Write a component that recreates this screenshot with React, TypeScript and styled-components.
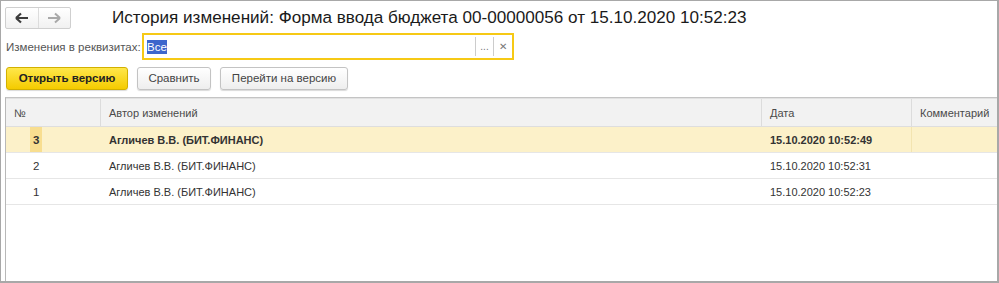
import React from "react";
import styled, { createGlobalStyle } from "styled-components";

const GlobalStyle = createGlobalStyle`
  html, body { margin: 0; padding: 0; background: #ffffff; }
  body { font-family: "Liberation Sans", Arial, sans-serif; }
  * { box-sizing: border-box; }
`;

const Frame = styled.div`
  width: 999px;
  height: 283px;
  border-style: solid;
  border-color: #a8a8a8;
  border-width: 1px 2px 2px 1px;
  display: flex;
  flex-direction: column;
  overflow: hidden;
  background: #fff;
`;

const TopBar = styled.div`
  display: flex;
  align-items: center;
  height: 30px;
  padding: 3px 0 0 4px;
`;

const NavGroup = styled.div`
  display: flex;
  width: 66px;
  height: 22px;
  border: 1px solid #cfcfcf;
  border-radius: 2px;
  background: linear-gradient(#ffffff, #f1f1f1);
`;

const NavButton = styled.div<{ $divider?: boolean }>`
  flex: 1;
  display: flex;
  align-items: center;
  justify-content: center;
  border-right: ${(p) => (p.$divider ? "1px solid #dcdcdc" : "none")};
`;

const Title = styled.div`
  margin-left: 41px;
  font-size: 17.1px;
  color: #1a1a1a;
  white-space: nowrap;
`;

const FieldRow = styled.div`
  display: flex;
  align-items: center;
  height: 27px;
  margin-top: 2px;
  padding-left: 5px;
`;

const Label = styled.div`
  font-size: 11.5px;
  color: #555;
  width: 136px;
  white-space: nowrap;
`;

const InputBox = styled.div`
  width: 372px;
  height: 27px;
  border: 2px solid #f6c915;
  display: flex;
  align-items: center;
  background: #fff;
`;

const InputValue = styled.div`
  flex: 1;
  padding-left: 3px;
  font-size: 11.5px;
`;

const Selected = styled.span`
  background: #3d66cc;
  color: #fff;
  padding: 1px 0;
`;

const InputAction = styled.div<{ $w: number }>`
  width: ${(p) => p.$w}px;
  height: 19px;
  border-left: 1px solid #cccccc;
  display: flex;
  align-items: center;
  justify-content: center;
  font-size: 10px;
  color: #777;
`;

const ButtonRow = styled.div`
  display: flex;
  align-items: center;
  gap: 9px;
  height: 24px;
  margin-top: 6px;
  padding-left: 5px;
`;

const Button = styled.div<{ $primary?: boolean; $w: number }>`
  width: ${(p) => p.$w}px;
  height: 23px;
  display: flex;
  align-items: center;
  justify-content: center;
  font-size: 11.5px;
  border-radius: 3px;
  white-space: nowrap;
  color: ${(p) => (p.$primary ? "#222" : "#444")};
  font-weight: ${(p) => (p.$primary ? 700 : 400)};
  border: 1px solid ${(p) => (p.$primary ? "#d2b000" : "#c3c3c3")};
  background: ${(p) =>
    p.$primary
      ? "linear-gradient(#ffe74a, #f4cb00)"
      : "linear-gradient(#ffffff, #eeeeee)"};
  box-shadow: 0 1px 1px rgba(0, 0, 0, 0.15);
`;

const Table = styled.div`
  margin: 7px 0 0 4px;
  flex: 1;
  border-left: 1px solid #b8b8b8;
  border-top: 1px solid #c4c4c4;
  display: flex;
  flex-direction: column;
`;

const cols = "95px 661px 150px 1fr";

const HeadRow = styled.div`
  display: grid;
  grid-template-columns: ${cols};
  height: 29px;
  background: #f2f2f2;
  border-top: 1px solid #e2e2e2;
  border-bottom: 1px solid #dedede;
`;

const HeadCell = styled.div<{ $last?: boolean }>`
  display: flex;
  align-items: center;
  padding-left: 8px;
  font-size: 11px;
  color: #4a4a4a;
  border-right: ${(p) => (p.$last ? "none" : "1px solid #dcdcdc")};
  white-space: nowrap;
  overflow: hidden;
`;

const Row = styled.div<{ $selected?: boolean }>`
  display: grid;
  grid-template-columns: ${cols};
  height: 26px;
  background: ${(p) => (p.$selected ? "#fcf1c9" : "#ffffff")};
  border-bottom: 1px solid #e6e6e6;
  font-weight: ${(p) => (p.$selected ? 700 : 400)};
`;

const Cell = styled.div<{ $sep?: boolean }>`
  display: flex;
  align-items: center;
  padding-left: 8px;
  font-size: 11px;
  color: #333;
  white-space: nowrap;
  border-right: ${(p) => (p.$sep ? "1px solid #f3e4b0" : "none")};
`;

const NumCell = styled.div`
  display: flex;
  align-items: stretch;
  padding-left: 24px;
  font-size: 11.5px;
  color: #333;
`;

const NumMark = styled.span<{ $active?: boolean }>`
  display: flex;
  align-items: center;
  padding: 0 3px;
  background: ${(p) => (p.$active ? "#f8de90" : "transparent")};
`;

const rows = [
  { n: "3", date: "15.10.2020 10:52:49", selected: true },
  { n: "2", date: "15.10.2020 10:52:31" },
  { n: "1", date: "15.10.2020 10:52:23" },
];

export default function App() {
  return (
    <>
      <GlobalStyle />
      <Frame>
        <TopBar>
          <NavGroup>
            <NavButton $divider>
              <svg width="14" height="12" viewBox="0 0 14 12">
                <path d="M1 6 L6 1.5 M1 6 L6 10.5 M1 6 H13" stroke="#3c3c3c" strokeWidth="2.2" fill="none" />
              </svg>
            </NavButton>
            <NavButton>
              <svg width="14" height="12" viewBox="0 0 14 12">
                <path d="M13 6 L8 1.5 M13 6 L8 10.5 M13 6 H1" stroke="#a9a9a9" strokeWidth="2" fill="none" />
              </svg>
            </NavButton>
          </NavGroup>
          <Title>История изменений: Форма ввода бюджета 00-00000056 от 15.10.2020 10:52:23</Title>
        </TopBar>
        <FieldRow>
          <Label>Изменения в реквизитах:</Label>
          <InputBox>
            <InputValue>
              <Selected>Все</Selected>
            </InputValue>
            <InputAction $w={18}>...</InputAction>
            <InputAction $w={19}>✕</InputAction>
          </InputBox>
        </FieldRow>
        <ButtonRow>
          <Button $primary $w={122}>Открыть версию</Button>
          <Button $w={74}>Сравнить</Button>
          <Button $w={128}>Перейти на версию</Button>
        </ButtonRow>
        <Table>
          <HeadRow>
            <HeadCell>№</HeadCell>
            <HeadCell>Автор изменений</HeadCell>
            <HeadCell>Дата</HeadCell>
            <HeadCell $last>Комментарий</HeadCell>
          </HeadRow>
          {rows.map((r) => (
            <Row key={r.n} $selected={r.selected}>
              <NumCell>
                <NumMark $active={r.selected}>{r.n}</NumMark>
              </NumCell>
              <Cell>Агличев В.В. (БИТ.ФИНАНС)</Cell>
              <Cell $sep={r.selected}>{r.date}</Cell>
              <Cell />
            </Row>
          ))}
        </Table>
      </Frame>
    </>
  );
}
